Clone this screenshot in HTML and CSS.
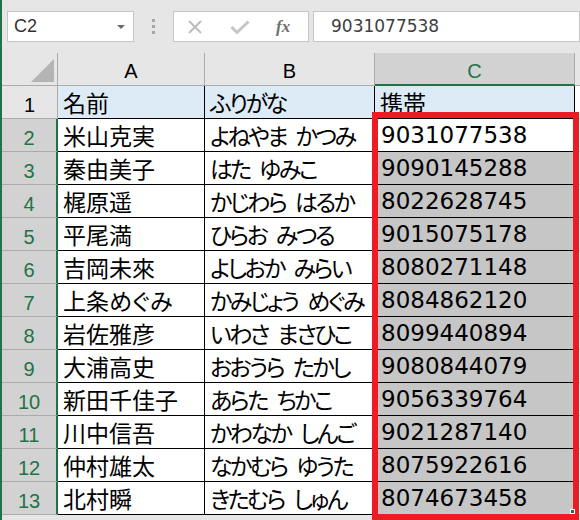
FILE: index.html
```html
<!DOCTYPE html>
<html lang="ja">
<head>
<meta charset="utf-8">
<link rel="stylesheet" href="styles.css">
</head>
<body>
<div class="app">
  <div class="fbar">
    <div class="namebox"><span>C2</span><span class="caret"></span></div>
    <div class="grip"><i></i><i></i><i></i></div>
    <div class="fbtns">
      <svg class="ico-x" width="16" height="14" viewBox="0 0 16 14"><path d="M2 1 L14 13 M14 1 L2 13" stroke="#bdbdbd" stroke-width="2" fill="none"/></svg>
      <svg class="ico-ok" width="20" height="14" viewBox="0 0 20 14"><path d="M1.5 7 L7 12.5 L18.5 1.5" stroke="#c6c6c6" stroke-width="3" fill="none"/></svg>
      <span class="fx">fx</span>
    </div>
    <div class="finput">9031077538</div>
  </div>
  <div class="sheet">
    <div class="corner"><span class="tri"></span></div>
    <div class="ch">A</div>
    <div class="ch">B</div>
    <div class="ch sel">C</div>
    <div class="ch rest"></div>

    <div class="rh plain">1</div>
    <div class="c jp hd">名前</div>
    <div class="c jp kana hd">ふりがな</div>
    <div class="c jp hd">携帯</div>
    <div class="c rest"></div>

    <div class="rh">2</div><div class="c jp">米山克実</div><div class="c jp kana">よねやま かつみ</div><div class="c num active">9031077538</div><div class="c rest"></div>
    <div class="rh">3</div><div class="c jp">秦由美子</div><div class="c jp kana">はた ゆみこ</div><div class="c num gray">9090145288</div><div class="c rest"></div>
    <div class="rh">4</div><div class="c jp">梶原遥</div><div class="c jp kana">かじわら はるか</div><div class="c num gray">8022628745</div><div class="c rest"></div>
    <div class="rh">5</div><div class="c jp">平尾満</div><div class="c jp kana">ひらお みつる</div><div class="c num gray">9015075178</div><div class="c rest"></div>
    <div class="rh">6</div><div class="c jp">吉岡未來</div><div class="c jp kana">よしおか みらい</div><div class="c num gray">8080271148</div><div class="c rest"></div>
    <div class="rh">7</div><div class="c jp">上条めぐみ</div><div class="c jp kana">かみじょう めぐみ</div><div class="c num gray">8084862120</div><div class="c rest"></div>
    <div class="rh">8</div><div class="c jp">岩佐雅彦</div><div class="c jp kana">いわさ まさひこ</div><div class="c num gray">8099440894</div><div class="c rest"></div>
    <div class="rh">9</div><div class="c jp">大浦高史</div><div class="c jp kana">おおうら たかし</div><div class="c num gray">9080844079</div><div class="c rest"></div>
    <div class="rh">10</div><div class="c jp">新田千佳子</div><div class="c jp kana">あらた ちかこ</div><div class="c num gray">9056339764</div><div class="c rest"></div>
    <div class="rh">11</div><div class="c jp">川中信吾</div><div class="c jp kana">かわなか しんご</div><div class="c num gray">9021287140</div><div class="c rest"></div>
    <div class="rh">12</div><div class="c jp">仲村雄太</div><div class="c jp kana">なかむら ゆうた</div><div class="c num gray">8075922616</div><div class="c rest"></div>
    <div class="rh">13</div><div class="c jp">北村瞬</div><div class="c jp kana">きたむら しゅん</div><div class="c num gray">8074673458</div><div class="c rest"></div>
  </div>
  <div class="highlight"></div>
  <div class="handle"></div>
</div>
</body>
</html>
```

FILE: styles.css
```css
* { box-sizing: border-box; }

body {
  margin: 0;
  width: 580px;
  height: 520px;
  overflow: hidden;
  background: #e6e6e6;
  font-family: "Liberation Sans", Arial, sans-serif;
}

.app {
  position: relative;
  height: 520px;
  padding-top: 11px;
  overflow: hidden;
  border-left: 2px solid #217346;
}

/* formula bar */
.fbar {
  display: flex;
  height: 31px;
}

.namebox {
  margin-left: 5px;
  width: 127px;
  background: #fff;
  border: 1px solid #c6c6c6;
  display: flex;
  align-items: center;
  justify-content: space-between;
  padding: 0 8px 0 6px;
  font-size: 18px;
  color: #333;
}

.caret {
  width: 0;
  height: 0;
  border-left: 4px solid transparent;
  border-right: 4px solid transparent;
  border-top: 4px solid #6b6b6b;
}

.grip {
  width: 39px;
  display: flex;
  flex-direction: column;
  align-items: center;
  justify-content: center;
  gap: 3px;
}

.grip i {
  display: block;
  width: 3px;
  height: 3px;
  background: #a6a6a6;
}

.fbtns {
  width: 136px;
  background: #fff;
  border: 1px solid #c6c6c6;
  display: flex;
  align-items: center;
  padding-left: 13px;
}

.ico-ok { margin-left: 27px; }

.fx {
  margin-left: 26px;
  font-family: "Liberation Serif", serif;
  font-style: italic;
  font-weight: bold;
  font-size: 17px;
  color: #707070;
}

.finput {
  margin-left: 4px;
  width: 267px;
  background: #fff;
  border: 1px solid #c6c6c6;
  padding-left: 17px;
  font-family: "DejaVu Sans", sans-serif;
  font-size: 17px;
  line-height: 29px;
  color: #404040;
}

/* sheet grid */
.sheet {
  display: grid;
  grid-template-columns: 56px 147px 170px 200px 1fr;
  grid-template-rows: 33px;
  grid-auto-rows: 33px;
  margin-top: 11px;
}

.corner {
  background: #e6e6e6;
  border-right: 1px solid #ababab;
  border-bottom: 1px solid #ababab;
  display: flex;
  justify-content: flex-end;
  align-items: flex-end;
  padding: 0 3px 3px 0;
}

.tri {
  width: 0;
  height: 0;
  border-left: 23px solid transparent;
  border-bottom: 23px solid #b4b4b4;
}

.ch {
  background: #e6e6e6;
  border-right: 1px solid #ababab;
  border-bottom: 1px solid #ababab;
  text-align: center;
  font-size: 20px;
  line-height: 32px;
  padding-top: 2px;
  color: #000;
}

.ch.sel {
  background: #d2d2d2;
  color: #217346;
  border-bottom: 2px solid #217346;
}

.ch.rest { border-right: none; }

.rh {
  background: #d2d2d2;
  color: #217346;
  border-right: 2px solid #217346;
  border-bottom: 1px solid #ababab;
  text-align: center;
  font-size: 20px;
  line-height: 32px;
  padding-top: 3px;
}

.rh.plain {
  background: #e6e6e6;
  color: #000;
  border-right: 1px solid #ababab;
}

.c {
  background: #fff;
  border-right: 1px solid #000;
  border-bottom: 1px solid #000;
  padding-left: 5px;
  white-space: nowrap;
  overflow: hidden;
  color: #000;
}

.c.rest {
  border-right: none;
  border-bottom: 1px solid #d4d4d4;
}

.jp {
  font-family: "Noto Sans CJK JP", sans-serif;
  font-feature-settings: "palt";
  font-size: 23px;
  line-height: 32px;
}

.kana {
  letter-spacing: -2.5px;
  word-spacing: 7px;
}

.hd { background: #ddebf7; }

.num {
  font-family: "DejaVu Sans", sans-serif;
  font-size: 23px;
  line-height: 32px;
  padding-left: 6px;
}

.gray { background: #c6c6c6; }
.active { background: #fff; }

/* annotation overlay */
.highlight {
  position: absolute;
  left: 370px;
  top: 112px;
  width: 207px;
  height: 408px;
  border: 6px solid #ed1c24;
}

.handle {
  position: absolute;
  left: 568px;
  top: 509px;
  width: 5px;
  height: 5px;
  background: #217346;
  border: 1px solid #fff;
}
```
